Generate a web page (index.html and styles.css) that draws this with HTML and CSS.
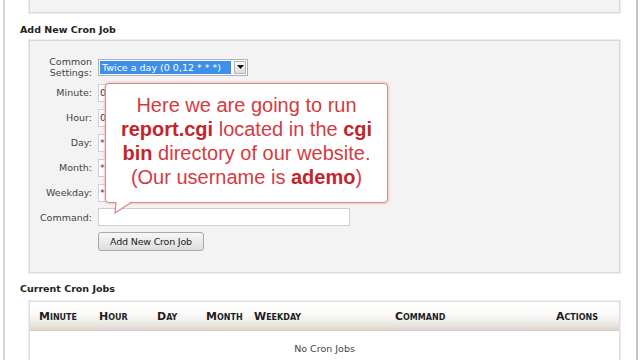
FILE: index.html
```html
<!DOCTYPE html>
<html>
<head>
<meta charset="utf-8">
<link rel="stylesheet" href="styles.css">
</head>
<body>
<div class="page">
  <div class="panel panel-top"></div>

  <h2 class="section-title">Add New Cron Job</h2>
  <div class="panel form-panel">
    <div class="form-grid">
      <label class="lbl">Common<br>Settings:</label>
      <div class="fake-select">
        <span class="sel-text">Twice a day (0 0,12 * * *)</span>
        <span class="sel-btn"><svg width="7" height="4" viewBox="0 0 7 4"><path d="M0 0H7L3.5 4Z" fill="#111"/></svg></span>
      </div>
      <label class="lbl">Minute:</label><input class="field short" value="0">
      <label class="lbl">Hour:</label><input class="field short" value="0">
      <label class="lbl">Day:</label><input class="field short" value="*">
      <label class="lbl">Month:</label><input class="field short" value="*">
      <label class="lbl">Weekday:</label><input class="field short" value="*">
      <label class="lbl">Command:</label><input class="field long" value="">
      <span></span><button class="btn">Add New Cron Job</button>
    </div>

    <div class="callout">
      <p>Here we are going to run<br><b>report.cgi</b> located in the <b>cgi</b><br><b>bin</b> directory of our website.<br>(Our username is <b>ademo</b>)</p>
      <svg class="tail" width="22" height="14" viewBox="0 0 22 14">
        <polygon points="4,0 3,12 20,0" fill="#fff"/>
        <polyline points="4,1 3,12 20,1" fill="none" stroke="#d98a8a" stroke-width="1.2"/>
      </svg>
    </div>
  </div>

  <h2 class="section-title second">Current Cron Jobs</h2>
  <div class="panel table-panel">
    <table class="jobs">
      <colgroup>
        <col class="c1"><col class="c2"><col class="c3"><col class="c4"><col class="c5"><col class="c6"><col class="c7">
      </colgroup>
      <thead>
        <tr>
          <th class="first">Minute</th>
          <th>Hour</th>
          <th>Day</th>
          <th>Month</th>
          <th>Weekday</th>
          <th>Command</th>
          <th class="last">Actions</th>
        </tr>
      </thead>
      <tbody>
        <tr><td class="empty" colspan="7">No Cron Jobs</td></tr>
      </tbody>
    </table>
  </div>
</div>
</body>
</html>
```

FILE: styles.css
```css
html, body {
  margin: 0;
  padding: 0;
  background: #fff;
  height: 360px;
  overflow: hidden;
  font-family: "DejaVu Sans", Verdana, sans-serif;
  color: #333;
}

.page {
  margin: 0 2px 0 3px;
  border-left: 2px solid #d4d4d4;
  border-right: 2px solid #c4c4c4;
  padding: 0 16px 0 15px;
  min-height: 360px;
}

.panel {
  background: #f3f3f3;
  border: 1px solid #d9d9d9;
  box-shadow: 0 0 0 1px #ededed;
  margin-left: 9px;
}

.panel-top {
  height: 12px;
  border-top: none;
}

.section-title {
  margin: 11px 0 4px;
  font-size: 9.5px;
  line-height: 12px;
  font-weight: bold;
  color: #222;
}

.section-title.second {
  margin: 10px 0 6px;
}

.form-panel {
  position: relative;
  padding: 13px 0 21px;
}

.form-grid {
  display: grid;
  grid-template-columns: 62px auto;
  column-gap: 6px;
  grid-template-rows: 26px repeat(6, 25px) auto;
  justify-items: start;
}

.lbl {
  justify-self: end;
  align-self: center;
  text-align: right;
  font-size: 9.5px;
  line-height: 11px;
  color: #444;
}

.fake-select {
  align-self: center;
  display: flex;
  align-items: center;
  width: 150px;
  height: 17px;
  box-sizing: border-box;
  border: 1px solid #a9b3bd;
  background: #fff;
  padding: 1px;
  gap: 3px;
}

.sel-text {
  flex: 1;
  height: 13px;
  line-height: 13px;
  background: #3d8fe8;
  color: #fff;
  font-size: 9.5px;
  padding-left: 2px;
  white-space: nowrap;
  overflow: hidden;
}

.sel-btn {
  width: 12px;
  height: 13px;
  box-sizing: border-box;
  border: 1px solid #b5b5b5;
  background: linear-gradient(#fafafa, #dcdcdc);
  display: flex;
  align-items: center;
  justify-content: center;
}

.field {
  align-self: center;
  height: 18px;
  box-sizing: border-box;
  border: 1px solid #c9d2da;
  background: #fff;
  font-family: "DejaVu Sans", Verdana, sans-serif;
  font-size: 9.5px;
  color: #333;
  padding: 0 1px;
  margin: 0;
}

.field.short { width: 60px; }
.field.long { width: 252px; margin-top: -1px; }

.btn {
  margin-top: 2px;
  width: 106px;
  height: 19px;
  box-sizing: border-box;
  border: 1px solid #a8a8a8;
  border-radius: 3px;
  background: linear-gradient(#f7f7f7, #dedede);
  font-family: "DejaVu Sans", Verdana, sans-serif;
  font-size: 9.5px;
  color: #222;
  padding: 0;
  letter-spacing: -0.2px;
}

.callout {
  position: absolute;
  left: 75px;
  top: 42px;
  width: 283px;
  height: 120px;
  box-sizing: border-box;
  background: #fff;
  border: 1px solid #d98a8a;
  border-radius: 4px;
  box-shadow: 0 0 2px 1px rgba(235, 170, 170, 0.6);
  text-align: center;
}

.callout p {
  margin: 0;
  padding-top: 9px;
  font-family: "Liberation Sans", Arial, sans-serif;
  font-size: 20px;
  line-height: 24px;
  color: #d43b3f;
}

.callout b {
  color: #c2262b;
}

.tail {
  position: absolute;
  left: 6px;
  top: 117px;
}

.table-panel {
  background: #fff;
  border-color: #dcdcdc;
}

.jobs {
  width: 100%;
  border-collapse: collapse;
  table-layout: fixed;
}

.c1 { width: 69px; }
.c2 { width: 58px; }
.c3 { width: 49px; }
.c4 { width: 48px; }
.c5 { width: 141px; }
.c7 { width: 90px; }

.jobs th {
  height: 28px;
  padding: 0;
  text-align: left;
  font-size: 11px;
  font-weight: bold;
  font-variant: small-caps;
  color: #1e1e1e;
  background: linear-gradient(#ffffff 0%, #fbfaf9 45%, #e9e3dd 85%, #ddd4cc 100%);
  border-bottom: 1px solid #d6cec7;
}

.jobs th.first { padding-left: 9px; }
.jobs th.last { text-align: right; padding-right: 21px; }

.jobs td.empty {
  text-align: center;
  padding: 12px 0 20px;
  font-size: 9.5px;
  color: #444;
}
```
